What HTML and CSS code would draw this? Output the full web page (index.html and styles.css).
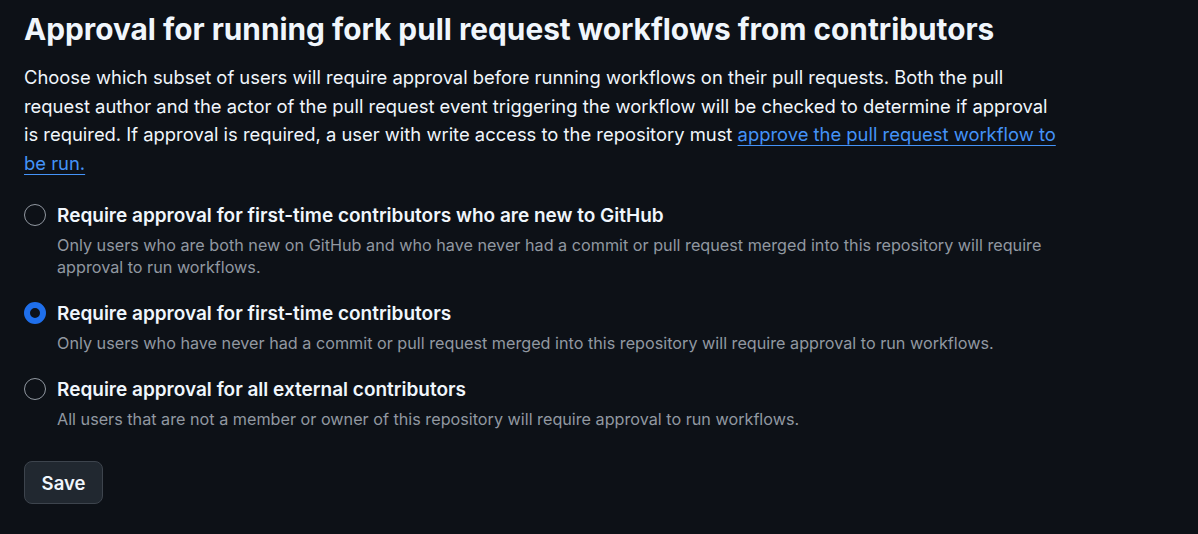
FILE: index.html
```html
<!DOCTYPE html>
<html lang="en">
<head>
<meta charset="utf-8">
<link rel="stylesheet" href="styles.css">
</head>
<body>
<main class="settings">
  <h2 class="title">Approval for running fork pull request workflows from contributors</h2>
  <p class="intro">Choose which subset of users will require approval before running workflows on their pull requests. Both the pull request author and the actor of the pull request event triggering the workflow will be checked to determine if approval is required. If approval is required, a user with write access to the repository must <a href="#" class="link">approve the pull request workflow to be run.</a></p>
  <form class="options">
    <label class="option">
      <input type="radio" name="approval" class="radio">
      <span class="option-text">
        <span class="option-title">Require approval for first-time contributors who are new to GitHub</span>
        <span class="option-desc">Only users who are both new on GitHub and who have never had a commit or pull request merged into this repository will require approval to run workflows.</span>
      </span>
    </label>
    <label class="option">
      <input type="radio" name="approval" class="radio" checked>
      <span class="option-text">
        <span class="option-title">Require approval for first-time contributors</span>
        <span class="option-desc">Only users who have never had a commit or pull request merged into this repository will require approval to run workflows.</span>
      </span>
    </label>
    <label class="option">
      <input type="radio" name="approval" class="radio">
      <span class="option-text">
        <span class="option-title">Require approval for all external contributors</span>
        <span class="option-desc">All users that are not a member or owner of this repository will require approval to run workflows.</span>
      </span>
    </label>
    <div class="actions">
      <button type="button" class="btn">Save</button>
    </div>
  </form>
</main>
</body>
</html>
```

FILE: styles.css
```css
html, body {
  margin: 0;
  padding: 0;
  background: #0d1117;
}
body {
  font-family: Inter, "Noto Sans", "Liberation Sans", sans-serif;
  color: #f0f6fc;
}
.settings {
  width: 1040px;
  padding: 9px 24px 0;
}
.title {
  margin: 0;
  font-size: 29.8px;
  line-height: 40px;
  font-weight: 700;
}
.intro {
  margin: 14px 0 0;
  font-size: 18.4px;
  line-height: 28.5px;
  color: #f0f6fc;
}
.link {
  color: #4493f8;
  text-decoration: underline;
  text-underline-offset: 4px;
}
.options {
  margin-top: 25px;
  display: flex;
  flex-direction: column;
}
.option {
  display: flex;
  gap: 11px;
  align-items: flex-start;
  margin-bottom: 22px;
}
.radio {
  appearance: none;
  -webkit-appearance: none;
  margin: 2px 0 0 0;
  width: 22px;
  height: 22px;
  border-radius: 50%;
  border: 1.5px solid #9198a1;
  background: #0d1117;
  flex: none;
  box-sizing: border-box;
}
.radio:checked {
  border: 6.5px solid #1f6feb;
  background: #0d1117;
}
.option-text {
  display: flex;
  flex-direction: column;
}
.option-title {
  font-size: 19px;
  font-weight: 600;
  line-height: 27px;
}
.option-desc {
  margin-top: 5px;
  font-size: 16.2px;
  line-height: 22px;
  color: #9198a1;
}
.actions {
  margin-top: 9px;
}
.btn {
  font-family: inherit;
  font-size: 18.5px;
  font-weight: 600;
  color: #f0f6fc;
  background: #212830;
  border: 1px solid #3d444d;
  border-radius: 8px;
  box-sizing: border-box;
  height: 43px;
  width: 79px;
  padding: 0;
}
```
